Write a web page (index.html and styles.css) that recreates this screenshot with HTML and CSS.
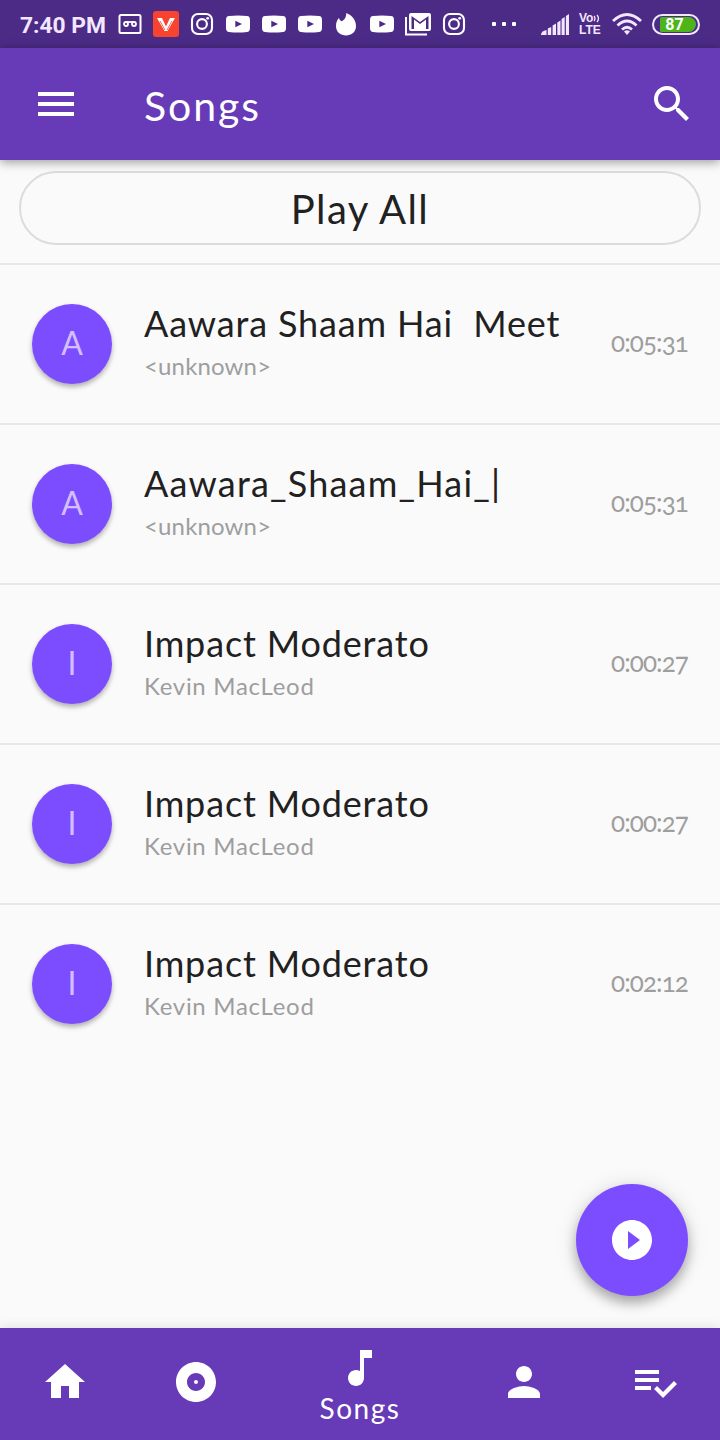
FILE: index.html
```html
<!DOCTYPE html>
<html lang="en">
<head>
    <meta charset="UTF-8">
    <meta name="viewport" content="width=device-width, initial-scale=1.0">
    <title>Songs</title>
    <link rel="stylesheet" href="styles.css">
</head>
<body>
    <svg class="defs">
        <symbol id="youtube" viewBox="0 0 24 18">
            <path fill-rule="evenodd" d="M3 1Q12 0 21 1Q24 1.200 24 5V13Q24 16.700 21 17Q12 18 3 17Q0 16.700 0 13V5Q0 1.200 3 1ZM9.300 5.800V12.200L16 9Z"/>
        </symbol>
        <symbol id="instagram" viewBox="0 0 24 24">
            <rect x="2" y="2" width="20" height="20" rx="6" fill="none" stroke="currentColor" stroke-width="2.100"/>
            <circle cx="12" cy="12" r="4.900" fill="none" stroke="currentColor" stroke-width="2.100"/>
            <circle cx="17.700" cy="6.300" r="1.400"/>
        </symbol>
    </svg>
    <div id="container">
        <div id="status-bar">
            <span class="clock">7:40 PM</span>
            <div class="notifications">
                <svg viewBox="0 0 24 24"><rect x="1.500" y="3" width="21" height="18" rx="1.500" fill="none" stroke="currentColor" stroke-width="2"/><g fill="none" stroke="currentColor" stroke-width="1.800"><circle cx="8" cy="12" r="2"/><circle cx="16" cy="12" r="2"/><path d="M8 10H16"/></g></svg>
                <svg class="vidmate" viewBox="0 0 26 26"><rect width="26" height="26" rx="3" fill="#f8432f"/><path d="M4 7H9L13 15.500L17 7H22L14.500 20H11.500Z" fill="#fff"/><path d="M7 10L12 19M19 10L14 19" stroke="#f8432f" stroke-width=".8" fill="none"/></svg>
                <svg><use href="#instagram"/></svg>
                <svg><use href="#youtube"/></svg>
                <svg><use href="#youtube"/></svg>
                <svg><use href="#youtube"/></svg>
                <svg viewBox="0 0 24 24"><path d="M12.200 1C18 3 22 8 22 14C22 20 17.500 23.500 12 23.500S2 20 2 14C2 10.500 3 8 5 6Q5.500 8.500 7.500 9.300C10.500 8 12.500 5 12.200 1Z"/></svg>
                <svg><use href="#youtube"/></svg>
                <svg class="gmail" viewBox="0 0 26 24"><path d="M1 5V22.500H22" fill="none" stroke="currentColor" stroke-width="2"/><path fill-rule="evenodd" d="M6 1H24Q26 1 26 3V17Q26 19 24 19H6Q4 19 4 17V3Q4 1 6 1ZM6.500 4V17H9V7.500L15 12L21 7.500V17H23.500V4L15 10Z"/></svg>
                <svg><use href="#instagram"/></svg>
            </div>
            <div class="dots"><i></i><i></i><i></i></div>
            <svg class="signal" viewBox="0 0 28 21"><path d="M0 21Q0 17 5.500 16V21ZM6.800 14.500L10.200 13V21H6.800ZM11.600 11.500L15 9.500V21H11.600ZM16.300 8.500L19.500 6.500V21H16.300ZM20.600 5L23.700 3V21H20.600ZM24.900 2L28 0V21H24.900Z"/></svg>
            <div class="volte">
                <div class="vo"><span>Vo</span><svg viewBox="0 0 7 9"><path d="M1 2Q3 4.500 1 7M4 1Q7 4.500 4 8" fill="none" stroke="currentColor" stroke-width="1.300"/></svg></div>
                <div>LTE</div>
            </div>
            <svg class="wifi" viewBox="0 0 30 22"><g fill="none" stroke="currentColor" stroke-width="2.800"><path d="M1 8Q15 -5 29 8"/><path d="M5.500 12.500Q15 3.500 24.500 12.500"/><path d="M10 16.500Q15 12 20 16.500"/></g><path d="M12 18.500Q15 16 18 18.500L15 22Z"/></svg>
            <div class="battery"><div class="level">87</div></div>
        </div>
        <div id="app-bar">
            <svg class="icon" viewBox="0 0 24 24"><path d="M3 18h18v-2H3v2zm0-5h18v-2H3v2zm0-7v2h18V6H3z"/></svg>
            <div class="page_title">Songs</div>
            <svg class="icon" viewBox="0 0 24 24"><path d="M15.500 14h-.79l-.28-.27C15.410 12.590 16 11.110 16 9.500 16 5.910 13.090 3 9.500 3S3 5.910 3 9.500 5.910 16 9.500 16c1.610 0 3.090-.59 4.230-1.570l.27.28v.79l5 4.990L20.490 19l-4.990-5zm-6 0C7.010 14 5 11.990 5 9.500S7.010 5 9.500 5 14 7.010 14 9.500 11.990 14 9.500 14z"/></svg>
        </div>
        <div id="songs">
            <div class="play_all">Play All</div>
            <div class="song">
                <div class="avatar">A</div>
                <div class="info">
                    <div class="song_name">Aawara Shaam Hai&nbsp; Meet</div>
                    <div class="artist unknown">&lt;unknown&gt;</div>
                </div>
                <div class="duration">0:05:31</div>
            </div>
            <div class="song">
                <div class="avatar">A</div>
                <div class="info">
                    <div class="song_name underscored">Aawara_Shaam_Hai_|</div>
                    <div class="artist unknown">&lt;unknown&gt;</div>
                </div>
                <div class="duration">0:05:31</div>
            </div>
            <div class="song">
                <div class="avatar">I</div>
                <div class="info">
                    <div class="song_name">Impact Moderato</div>
                    <div class="artist">Kevin MacLeod</div>
                </div>
                <div class="duration">0:00:27</div>
            </div>
            <div class="song">
                <div class="avatar">I</div>
                <div class="info">
                    <div class="song_name">Impact Moderato</div>
                    <div class="artist">Kevin MacLeod</div>
                </div>
                <div class="duration">0:00:27</div>
            </div>
            <div class="song">
                <div class="avatar">I</div>
                <div class="info">
                    <div class="song_name">Impact Moderato</div>
                    <div class="artist">Kevin MacLeod</div>
                </div>
                <div class="duration">0:02:12</div>
            </div>
            <div class="fab">
                <svg class="icon" viewBox="0 0 24 24"><path d="M12 2C6.480 2 2 6.480 2 12s4.480 10 10 10 10-4.480 10-10S17.520 2 12 2zm-2 14.500v-9l6 4.500-6 4.500z"/></svg>
            </div>
        </div>
        <div id="bottom-nav">
            <div class="tab"><svg class="icon" viewBox="0 0 24 24"><path d="M10 20v-6h4v6h5v-8h3L12 3 2 12h3v8z"/></svg></div>
            <div class="tab"><svg class="icon" viewBox="0 0 24 24"><path d="M12 2C6.480 2 2 6.480 2 12s4.480 10 10 10 10-4.480 10-10S17.520 2 12 2zm0 14.500c-2.490 0-4.500-2.010-4.500-4.500S9.510 7.500 12 7.500s4.500 2.010 4.500 4.500-2.010 4.500-4.500 4.500zm0-5.500c-.55 0-1 .45-1 1s.45 1 1 1 1-.45 1-1-.45-1-1-1z"/></svg></div>
            <div class="tab active"><svg class="icon" viewBox="0 0 24 24"><path d="M12 3v10.550c-.59-.34-1.270-.55-2-.55-2.210 0-4 1.790-4 4s1.790 4 4 4 4-1.790 4-4V7h4V3h-6z"/></svg><span class="tab_label">Songs</span></div>
            <div class="tab"><svg class="icon" viewBox="0 0 24 24"><path d="M12 12c2.210 0 4-1.790 4-4s-1.790-4-4-4-4 1.790-4 4 1.790 4 4 4zm0 2c-2.670 0-8 1.340-8 4v2h16v-2c0-2.660-5.330-4-8-4z"/></svg></div>
            <div class="tab"><svg class="icon" viewBox="0 0 24 24"><path d="M14 10H2v2h12v-2zm0-4H2v2h12V6zM2 16h8v-2H2v2zm19.500-4.500L23 13l-6.990 7-4.510-4.500L13 14l3.010 3 5.490-5.500z"/></svg></div>
        </div>
    </div>
</body>
</html>
```
FILE: styles.css
```css
body{
    margin:0;padding:0;
    background-color: #fafafa;
    font-family: Lato, "Open Sans", sans-serif;
}
svg{
    fill: currentColor;
    flex: none;
}
.defs{
    display: none;
}
.icon{
    display: block;
    width:48px;
    height:48px;
}
#container{
    display: flex;
    flex-direction: column;
    width:720px;
    height:1440px;
}
/* status bar */
#status-bar{
    display: flex;
    align-items: center;
    box-sizing: border-box;
    height:48px;
    padding:0 20px;
    background-color: #4c2b87;
    color: #f3e6ff;
}
.clock{
    width:98px;
    padding-top:2px;
    font: 700 22.8px Roboto, sans-serif;
    white-space: nowrap;
}
.notifications{
    display: flex;
    gap:12px;
    color: white;
}
.notifications svg{
    width:24px;
    height:24px;
}
.notifications .vidmate, .notifications .gmail{
    width:26px;
    height:26px;
    margin:-1px;
}
.dots{
    display: flex;
    gap:6px;
    margin-left:26px;
}
.dots i{
    width:4px;
    height:4px;
    border-radius: 1px;
    background-color: white;
}
.signal{
    width:28px;
    height:21px;
    margin-left:25px;
}
.volte{
    width:24px;
    margin-left:10px;
    font: 700 12px/12px "Liberation Sans", sans-serif;
    white-space: nowrap;
}
.vo{
    display: flex;
    align-items: center;
}
.vo svg{
    width:7px;
    height:9px;
}
.wifi{
    width:30px;
    height:22px;
    margin-left:9px;
}
.battery{
    box-sizing: border-box;
    width:48px;
    height:21px;
    margin-left:10px;
    padding:1px 2px 1px 6px;
    border: 2px solid #f3e6ff;
    border-radius: 11px;
}
.level{
    height:15px;
    padding-right:7px;
    border-radius: 2px 8px 8px 2px;
    background-color: #4db51b;
    color: white;
    font: 700 16px/16px Roboto, sans-serif;
    text-align: center;
}
/* app bar */
#app-bar{
    display: flex;
    align-items: center;
    box-sizing: border-box;
    height:112px;
    padding:0 24px 0 32px;
    background-color: #673ab7;
    color: white;
    box-shadow: 0 2px 10px rgba(0,0,0,.4);
    z-index: 1;
}
.page_title{
    flex: 1;
    margin-left:64px;
    padding-top:2px;
    font-size: 41px;
    letter-spacing: 1.9px;
}
/* song list */
#songs{
    position: relative;
    flex: 1;
    color: #212121;
}
.play_all{
    box-sizing: border-box;
    height:74px;
    margin:11px 19px 18px;
    border: 2px solid #dcdcdc;
    border-radius: 37px;
    font-size: 40px;
    line-height: 72px;
    letter-spacing: 1.4px;
    text-align: center;
}
.song{
    display: flex;
    align-items: center;
    box-sizing: border-box;
    height:160px;
    padding:0 32px;
    border-top: 2px solid #e8e8e8;
}
.avatar{
    width:80px;
    height:80px;
    border-radius: 50%;
    background-color: #7c4dff;
    box-shadow: 0 3px 5px rgba(0,0,0,.3);
    color: #d3bfff;
    font-size: 32px;
    line-height: 78px;
    text-align: center;
}
.info{
    flex: 1;
    margin-left:32px;
    white-space: nowrap;
}
.song_name{
    font-size: 36px;
    line-height: 42px;
    padding-bottom:2px;
    letter-spacing: .85px;
}
.underscored{
    letter-spacing: 1.2px;
}
.artist{
    font-size: 24px;
    line-height: 40px;
    letter-spacing: .7px;
    color: #9e9e9e;
}
.unknown{
    letter-spacing: .15px;
}
.duration{
    padding-bottom:4px;
    font-size: 26px;
    font-variant-numeric: oldstyle-nums;
    letter-spacing: -.9px;
    color: #9e9e9e;
}
.fab{
    position: absolute;
    right:32px;
    bottom:32px;
    display: flex;
    justify-content: center;
    align-items: center;
    width:112px;
    height:112px;
    border-radius: 50%;
    background-color: #7c4dff;
    color: white;
    box-shadow: 0 7px 12px rgba(0,0,0,.28), 0 2px 22px rgba(0,0,0,.12);
}
/* bottom navigation */
#bottom-nav{
    display: flex;
    height:112px;
    background-color: #673ab7;
    color: white;
    box-shadow: 0 0 12px rgba(0,0,0,.12);
}
.tab{
    flex: 1;
    display: flex;
    flex-direction: column;
    align-items: center;
    padding-top:30px;
}
.active{
    flex: 1.5;
    padding-top:16px;
}
.tab_label{
    font-size: 28px;
    line-height: 32px;
    letter-spacing: 1.5px;
}
```
